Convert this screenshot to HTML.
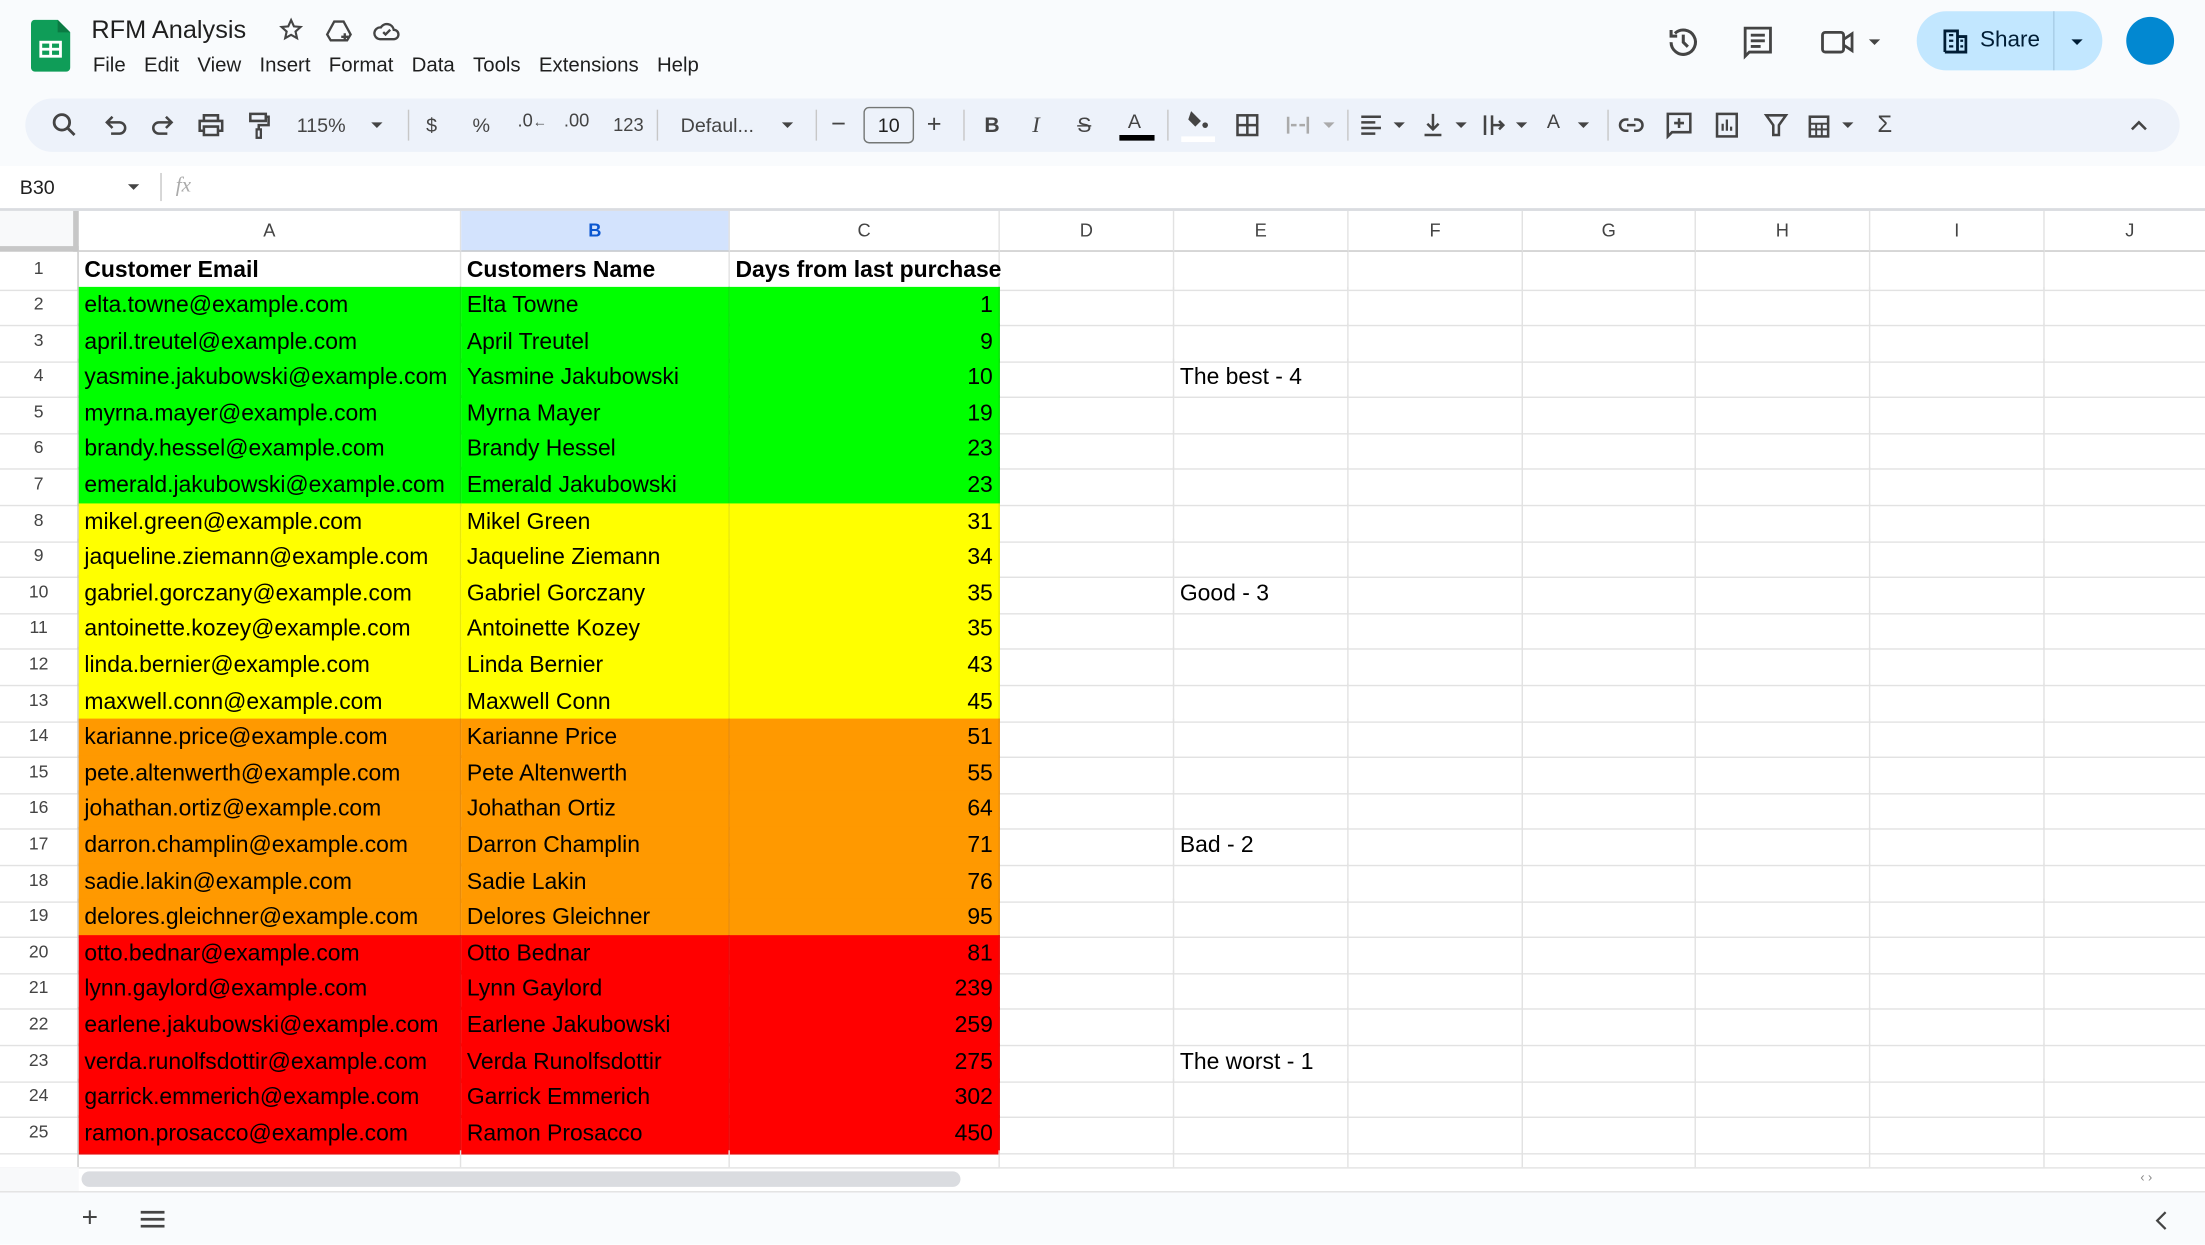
<!DOCTYPE html>
<html><head><meta charset="utf-8">
<style>
*{margin:0;padding:0;box-sizing:border-box}
html,body{width:2205px;height:1245px;overflow:hidden;background:#fff}
#w{position:absolute;left:0;top:0;width:1568px;height:885px;transform:scale(1.40625);transform-origin:0 0;font-family:"Liberation Sans",Arial,sans-serif;color:#000;background:#fff;overflow:hidden}
.abs{position:absolute}
#top{left:0;top:0;width:1568px;height:118px;background:#f9fbfd}
#title{left:65px;top:11px;font-size:18px;color:#1f1f1f}
#menu{left:66px;top:39px;font-size:14.5px;color:#1f1f1f;white-space:nowrap}
#menu span{margin-right:13px}
#tb{left:18px;top:70px;width:1532px;height:38px;background:#edf2fa;border-radius:19px}
.ic{position:absolute;top:79px;width:20px;height:20px}
.t{position:absolute;font-size:14px;color:#444;top:81px}
.sep{position:absolute;top:78px;width:1px;height:22px;background:#c7c7c7}
.dd{position:absolute;top:87px;width:0;height:0;border-left:4px solid transparent;border-right:4px solid transparent;border-top:4px solid #444}
#fb{left:0;top:118px;width:1568px;height:31px;background:#fff}
#grid{left:0;top:150px}
.r{display:grid;grid-template-columns:56px 272px 191px 192px 124px 124px 124px 123px 124px 124px 122px;height:25.6px}
.r>div{border-right:1px solid #e2e2e2;border-bottom:1px solid #e2e2e2;font-size:16.3px;line-height:27px;padding-left:4px;white-space:nowrap;overflow:visible}
.r>div:first-child{font-size:12.5px;color:#444;text-align:center;padding:0;border-right:1px solid #c7c7c7;line-height:25px}
.r>div.n{text-align:right;padding-right:4px}
.h{height:28.5px}
.h>div{font-size:13px!important;color:#444;text-align:center;line-height:27px!important;padding:0!important;border-bottom:1px solid #c7c7c7!important;border-right:1px solid #e2e2e2}
.g>div:nth-child(2),.g>div:nth-child(3),.g>div:nth-child(4){background:#00ff00;border-color:#0ce10c}
.y>div:nth-child(2),.y>div:nth-child(3),.y>div:nth-child(4){background:#ffff00;border-color:#e8e80c}
.o>div:nth-child(2),.o>div:nth-child(3),.o>div:nth-child(4){background:#ff9900;border-color:#e88c0c}
.d>div:nth-child(2),.d>div:nth-child(3),.d>div:nth-child(4){background:#ff0000;border-color:#e80c0c}
.b>div{font-weight:bold}
.b>div:first-child{font-weight:normal}
#bot{left:0;top:847px;width:1568px;height:38px;background:#f9fbfd;border-top:1px solid #e2e2e2}
</style></head><body><div id="w">
<div id="top" class="abs"></div>
<svg class="abs" style="left:22px;top:14px" width="28" height="37" viewBox="0 0 28 37"><path d="M3 0h16l9 9v25a3 3 0 0 1-3 3H3a3 3 0 0 1-3-3V3a3 3 0 0 1 3-3z" fill="#0f9d58"/><path d="M19 0l9 9h-9z" fill="#0b7a43"/><rect x="6" y="15" width="16" height="12" fill="#fff"/><rect x="8" y="17" width="5" height="3" fill="#0f9d58"/><rect x="15" y="17" width="5" height="3" fill="#0f9d58"/><rect x="8" y="22" width="5" height="3" fill="#0f9d58"/><rect x="15" y="22" width="5" height="3" fill="#0f9d58"/></svg>
<div id="title" class="abs">RFM Analysis</div>
<svg class="abs" style="left:198px;top:12px" width="18" height="18" viewBox="0 0 24 24"><path d="M12 3l2.7 6 6.3.6-4.8 4.3 1.4 6.3L12 17l-5.6 3.2 1.4-6.3L3 9.6 9.3 9z" fill="none" stroke="#444" stroke-width="2"/></svg>
<svg class="abs" style="left:231px;top:12px" width="20" height="20" viewBox="0 0 24 24"><path d="M8 4h8l6 11-3 5H5l-3-5z" fill="none" stroke="#444" stroke-width="2"/><path d="M17 14v6M14 17h6" stroke="#444" stroke-width="2"/></svg>
<svg class="abs" style="left:264px;top:12px" width="22" height="20" viewBox="0 0 24 24"><path d="M6 19h12a4 4 0 0 0 0-8 6 6 0 0 0-11-2 5 5 0 0 0-1 10z" fill="none" stroke="#444" stroke-width="2"/><path d="M9 13l2 2 4-4" fill="none" stroke="#444" stroke-width="2"/></svg>
<div id="menu" class="abs"><span>File</span><span>Edit</span><span>View</span><span>Insert</span><span>Format</span><span>Data</span><span>Tools</span><span>Extensions</span><span>Help</span></div>
<svg class="abs" style="left:1184px;top:17px" width="26" height="26" viewBox="0 0 24 24"><path d="M4 12a8 8 0 1 0 2.5-5.8M4 4v4h4" fill="none" stroke="#444" stroke-width="2"/><path d="M12 7v5l3 3" fill="none" stroke="#444" stroke-width="2"/></svg>
<svg class="abs" style="left:1238px;top:18px" width="24" height="26" viewBox="0 0 24 26"><path d="M3 2h18v17H6l-3 3z" fill="none" stroke="#444" stroke-width="2"/><path d="M7 7h10M7 11h10M7 15h7" stroke="#444" stroke-width="2"/></svg>
<svg class="abs" style="left:1294px;top:19px" width="26" height="22" viewBox="0 0 26 22"><rect x="2" y="4" width="15" height="14" rx="2" fill="none" stroke="#444" stroke-width="2"/><path d="M17 9l6-4v12l-6-4" fill="none" stroke="#444" stroke-width="2"/></svg>
<div class="dd" style="left:1329px;top:28px"></div>
<div class="abs" style="left:1363px;top:8px;width:132px;height:42px;background:#c2e7ff;border-radius:21px"></div>
<div class="abs" style="left:1460px;top:8px;width:1px;height:42px;background:#a8cde6"></div>
<svg class="abs" style="left:1382px;top:20px" width="17" height="18" viewBox="0 0 17 18"><path d="M1 17V2h9v15M10 6h6v11H1" fill="none" stroke="#001d35" stroke-width="2"/><path d="M4 5h3M4 9h3M4 13h3M12 9h2M12 13h2" stroke="#001d35" stroke-width="1.6"/></svg>
<div class="abs" style="left:1408px;top:20px;font-size:16px;color:#001d35">Share</div>
<div class="dd" style="left:1473px;top:28px;border-top-color:#001d35"></div>
<div class="abs" style="left:1512px;top:12px;width:34px;height:34px;border-radius:50%;background:#0288d1"></div>

<div id="tb" class="abs"></div>
<svg class="ic" style="left:36px" viewBox="0 0 20 20"><circle cx="8" cy="8" r="5.5" fill="none" stroke="#444" stroke-width="2"/><path d="M12 12l5 5" stroke="#444" stroke-width="2"/></svg>
<svg class="ic" style="left:72px" viewBox="0 0 20 20"><path d="M5 8h8a4 4 0 0 1 0 8H7M8 4L4 8l4 4" fill="none" stroke="#444" stroke-width="1.8"/></svg>
<svg class="ic" style="left:106px" viewBox="0 0 20 20"><path d="M15 8H7a4 4 0 0 0 0 8h6M12 4l4 4-4 4" fill="none" stroke="#444" stroke-width="1.8"/></svg>
<svg class="ic" style="left:140px" viewBox="0 0 20 20"><path d="M5 7V3h10v4M5 14H2V7h16v7h-3M5 11h10v6H5z" fill="none" stroke="#444" stroke-width="1.8"/></svg>
<svg class="ic" style="left:174px" viewBox="0 0 20 20"><path d="M4 2h11v5H4zM15 4h2v6h-7v3" fill="none" stroke="#444" stroke-width="1.8"/><rect x="8.5" y="13" width="3" height="6" fill="none" stroke="#444" stroke-width="1.6"/></svg>
<div class="t" style="left:211px">115%</div><div class="dd" style="left:264px"></div>
<div class="sep" style="left:290px"></div>
<div class="t" style="left:303px">$</div><div class="t" style="left:336px">%</div>
<div class="t" style="left:368px;top:78px;font-size:13px">.0<span style="font-size:10px">←</span></div>
<div class="t" style="left:401px;top:78px;font-size:13px">.00</div>
<div class="t" style="left:436px;font-size:13px">123</div>
<div class="sep" style="left:467px"></div>
<div class="t" style="left:484px">Defaul...</div><div class="dd" style="left:556px"></div>
<div class="sep" style="left:580px"></div>
<div class="t" style="left:591px;font-size:18px;top:78px">−</div>
<div class="abs" style="left:614px;top:76px;width:36px;height:26px;border:1px solid #747775;border-radius:4px;font-size:14px;text-align:center;line-height:24px;color:#1f1f1f">10</div>
<div class="t" style="left:659px;font-size:18px;top:78px">+</div>
<div class="sep" style="left:685px"></div>
<div class="t" style="left:700px;font-weight:bold;font-size:15px">B</div>
<div class="t" style="left:734px;font-style:italic;font-size:16px;font-family:'Liberation Serif',serif">I</div>
<div class="t" style="left:766px;font-size:15px;text-decoration:line-through">S</div>
<div class="t" style="left:802px;font-size:14px;top:78px">A</div><div class="abs" style="left:796px;top:96px;width:25px;height:4px;background:#000"></div>
<div class="sep" style="left:830px"></div>
<svg class="ic" style="left:842px;top:77px" viewBox="0 0 20 20"><path d="M5 2l7 7-4 4-5-5z" fill="#444"/><circle cx="15" cy="12" r="2" fill="#444"/></svg><div class="abs" style="left:840px;top:97px;width:24px;height:4px;background:#fff"></div>
<svg class="ic" style="left:877px" viewBox="0 0 20 20"><rect x="3" y="3" width="14" height="14" fill="none" stroke="#444" stroke-width="1.8"/><path d="M10 3v14M3 10h14" stroke="#444" stroke-width="1.8"/></svg>
<svg class="ic" style="left:913px" viewBox="0 0 20 20"><path d="M3 4v12M17 4v12M5 10h4M11 10h4" stroke="#aaa" stroke-width="1.8"/></svg><div class="dd" style="left:941px;border-top-color:#aaa"></div>
<div class="sep" style="left:958px"></div>
<svg class="ic" style="left:965px" viewBox="0 0 20 20"><path d="M3 4h14M3 8h10M3 12h14M3 16h10" stroke="#444" stroke-width="1.8"/></svg><div class="dd" style="left:991px"></div>
<svg class="ic" style="left:1009px" viewBox="0 0 20 20"><path d="M10 2v11M6 9l4 4 4-4M4 17h12" fill="none" stroke="#444" stroke-width="1.8"/></svg><div class="dd" style="left:1035px"></div>
<svg class="ic" style="left:1053px" viewBox="0 0 20 20"><path d="M3 3v14M8 3v14M8 10h8M13 7l3 3-3 3" fill="none" stroke="#444" stroke-width="1.8"/></svg><div class="dd" style="left:1078px"></div>
<div class="t" style="left:1100px;top:78px">A</div><div class="dd" style="left:1122px"></div>
<div class="sep" style="left:1143px"></div>
<svg class="ic" style="left:1150px" viewBox="0 0 20 20"><path d="M8 6H6a4 4 0 0 0 0 8h2M12 6h2a4 4 0 0 1 0 8h-2M7 10h6" fill="none" stroke="#444" stroke-width="1.8"/></svg>
<svg class="ic" style="left:1184px" viewBox="0 0 20 20"><path d="M2 2h16v13H5l-3 3z" fill="none" stroke="#444" stroke-width="1.8"/><path d="M10 5v7M6.5 8.5h7" stroke="#444" stroke-width="1.8"/></svg>
<svg class="ic" style="left:1218px" viewBox="0 0 20 20"><rect x="3" y="2" width="14" height="16" fill="none" stroke="#444" stroke-width="1.8"/><path d="M7 14V9M10 14V6M13 14v-3" stroke="#444" stroke-width="1.6"/></svg>
<svg class="ic" style="left:1253px" viewBox="0 0 20 20"><path d="M3 3h14l-5 7v7h-4v-7z" fill="none" stroke="#444" stroke-width="1.8"/></svg>
<svg class="ic" style="left:1284px" viewBox="0 0 20 20"><rect x="3" y="4" width="13" height="14" fill="none" stroke="#444" stroke-width="1.8"/><path d="M3 9h13M3 13h13M7.5 9v9M11.5 9v9" stroke="#444" stroke-width="1.4"/></svg><div class="dd" style="left:1310px"></div>
<div class="t" style="left:1335px;font-size:17px;top:79px">Σ</div>
<svg class="ic" style="left:1511px" viewBox="0 0 20 20"><path d="M5 13l5-5 5 5" fill="none" stroke="#444" stroke-width="1.8"/></svg>

<div id="fb" class="abs"></div>
<div class="abs" style="left:14px;top:125px;font-size:14px;color:#1f1f1f">B30</div>
<div class="dd" style="left:91px;top:131px"></div>
<div class="abs" style="left:114px;top:123px;width:1px;height:20px;background:#c7c7c7"></div>
<div class="abs" style="left:125px;top:124px;font-size:15px;color:#aaa;font-style:italic;font-family:'Liberation Serif',serif">fx</div>
<div class="abs" style="left:0;top:148px;width:1568px;height:2px;background:#dadce0"></div>

<div id="grid" class="abs">
<div class="r h"><div style="background:#f8f9fa;border-right:4px solid #c7c7c7!important;border-bottom:4px solid #c7c7c7!important"></div><div>A</div><div style="background:#d3e3fd;color:#0b57d0;font-weight:bold">B</div><div>C</div><div>D</div><div>E</div><div>F</div><div>G</div><div>H</div><div>I</div><div>J</div></div>
<div class="r b"><div>1</div><div>Customer Email</div><div>Customers Name</div><div>Days from last purchase</div><div></div><div></div><div></div><div></div><div></div><div></div><div></div></div>
<div class="r g"><div>2</div><div>elta.towne@example.com</div><div>Elta Towne</div><div class="n">1</div><div></div><div></div><div></div><div></div><div></div><div></div><div></div></div>
<div class="r g"><div>3</div><div>april.treutel@example.com</div><div>April Treutel</div><div class="n">9</div><div></div><div></div><div></div><div></div><div></div><div></div><div></div></div>
<div class="r g"><div>4</div><div>yasmine.jakubowski@example.com</div><div>Yasmine Jakubowski</div><div class="n">10</div><div></div><div>The best - 4</div><div></div><div></div><div></div><div></div><div></div></div>
<div class="r g"><div>5</div><div>myrna.mayer@example.com</div><div>Myrna Mayer</div><div class="n">19</div><div></div><div></div><div></div><div></div><div></div><div></div><div></div></div>
<div class="r g"><div>6</div><div>brandy.hessel@example.com</div><div>Brandy Hessel</div><div class="n">23</div><div></div><div></div><div></div><div></div><div></div><div></div><div></div></div>
<div class="r g"><div>7</div><div>emerald.jakubowski@example.com</div><div>Emerald Jakubowski</div><div class="n">23</div><div></div><div></div><div></div><div></div><div></div><div></div><div></div></div>
<div class="r y"><div>8</div><div>mikel.green@example.com</div><div>Mikel Green</div><div class="n">31</div><div></div><div></div><div></div><div></div><div></div><div></div><div></div></div>
<div class="r y"><div>9</div><div>jaqueline.ziemann@example.com</div><div>Jaqueline Ziemann</div><div class="n">34</div><div></div><div></div><div></div><div></div><div></div><div></div><div></div></div>
<div class="r y"><div>10</div><div>gabriel.gorczany@example.com</div><div>Gabriel Gorczany</div><div class="n">35</div><div></div><div>Good - 3</div><div></div><div></div><div></div><div></div><div></div></div>
<div class="r y"><div>11</div><div>antoinette.kozey@example.com</div><div>Antoinette Kozey</div><div class="n">35</div><div></div><div></div><div></div><div></div><div></div><div></div><div></div></div>
<div class="r y"><div>12</div><div>linda.bernier@example.com</div><div>Linda Bernier</div><div class="n">43</div><div></div><div></div><div></div><div></div><div></div><div></div><div></div></div>
<div class="r y"><div>13</div><div>maxwell.conn@example.com</div><div>Maxwell Conn</div><div class="n">45</div><div></div><div></div><div></div><div></div><div></div><div></div><div></div></div>
<div class="r o"><div>14</div><div>karianne.price@example.com</div><div>Karianne Price</div><div class="n">51</div><div></div><div></div><div></div><div></div><div></div><div></div><div></div></div>
<div class="r o"><div>15</div><div>pete.altenwerth@example.com</div><div>Pete Altenwerth</div><div class="n">55</div><div></div><div></div><div></div><div></div><div></div><div></div><div></div></div>
<div class="r o"><div>16</div><div>johathan.ortiz@example.com</div><div>Johathan Ortiz</div><div class="n">64</div><div></div><div></div><div></div><div></div><div></div><div></div><div></div></div>
<div class="r o"><div>17</div><div>darron.champlin@example.com</div><div>Darron Champlin</div><div class="n">71</div><div></div><div>Bad - 2</div><div></div><div></div><div></div><div></div><div></div></div>
<div class="r o"><div>18</div><div>sadie.lakin@example.com</div><div>Sadie Lakin</div><div class="n">76</div><div></div><div></div><div></div><div></div><div></div><div></div><div></div></div>
<div class="r o"><div>19</div><div>delores.gleichner@example.com</div><div>Delores Gleichner</div><div class="n">95</div><div></div><div></div><div></div><div></div><div></div><div></div><div></div></div>
<div class="r d"><div>20</div><div>otto.bednar@example.com</div><div>Otto Bednar</div><div class="n">81</div><div></div><div></div><div></div><div></div><div></div><div></div><div></div></div>
<div class="r d"><div>21</div><div>lynn.gaylord@example.com</div><div>Lynn Gaylord</div><div class="n">239</div><div></div><div></div><div></div><div></div><div></div><div></div><div></div></div>
<div class="r d"><div>22</div><div>earlene.jakubowski@example.com</div><div>Earlene Jakubowski</div><div class="n">259</div><div></div><div></div><div></div><div></div><div></div><div></div><div></div></div>
<div class="r d"><div>23</div><div>verda.runolfsdottir@example.com</div><div>Verda Runolfsdottir</div><div class="n">275</div><div></div><div>The worst - 1</div><div></div><div></div><div></div><div></div><div></div></div>
<div class="r d"><div>24</div><div>garrick.emmerich@example.com</div><div>Garrick Emmerich</div><div class="n">302</div><div></div><div></div><div></div><div></div><div></div><div></div><div></div></div>
<div class="r d"><div>25</div><div>ramon.prosacco@example.com</div><div>Ramon Prosacco</div><div class="n">450</div><div></div><div></div><div></div><div></div><div></div><div></div><div></div></div>
<div class="r" style="height:14px"><div></div><div></div><div></div><div></div><div></div><div></div><div></div><div></div><div></div><div></div><div></div></div>
</div>
<div class="abs" style="left:0;top:830px;width:1568px;height:17px;background:#fff;border-top:1px solid #e2e2e2"></div>
<div class="abs" style="left:0;top:830px;width:56px;height:17px;background:#f8f9fa"></div>
<div class="abs" style="left:58px;top:833px;width:625px;height:11px;background:#dadce0;border-radius:6px"></div>
<div class="abs" style="left:1522px;top:832px;font-size:9px;color:#888">‹ ›</div>
<div id="bot" class="abs"></div>
<div class="abs" style="left:58px;top:855px;font-size:20px;color:#444">+</div>
<svg class="abs" style="left:100px;top:861px" width="17" height="12" viewBox="0 0 17 12"><path d="M0 1h17M0 6h17M0 11h17" stroke="#444" stroke-width="2"/></svg>
<svg class="abs" style="left:1532px;top:861px" width="10" height="14" viewBox="0 0 10 14"><path d="M8 1L2 7l6 6" fill="none" stroke="#444" stroke-width="1.6"/></svg>
</div></body></html>
